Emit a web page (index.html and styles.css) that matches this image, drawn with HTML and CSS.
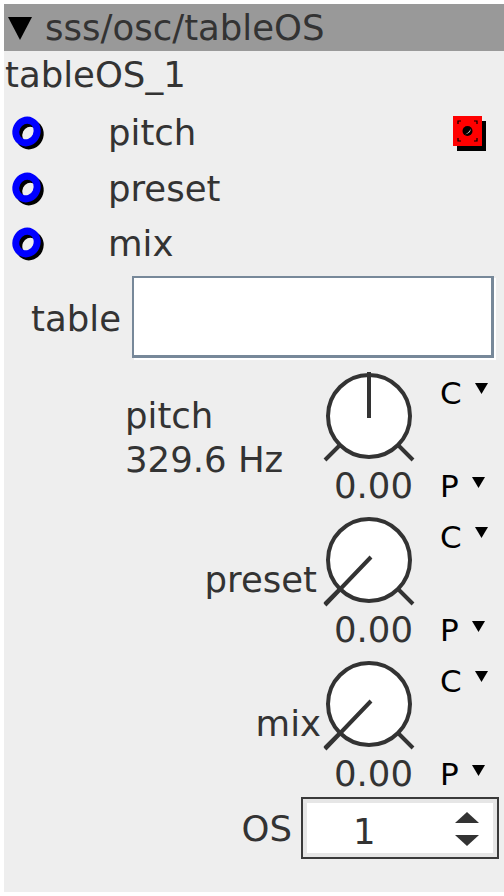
FILE: index.html
```html
<!DOCTYPE html>
<html>
<head>
<meta charset="utf-8">
<link rel="stylesheet" href="styles.css">
</head>
<body>
<div class="panel">
  <div class="header">
    <svg class="htri" width="24" height="23" viewBox="0 0 24 23"><polygon points="0,0 24,0 12,23" fill="#000"/></svg>
    <span class="htext">sss/osc/tableOS</span>
  </div>
  <div class="title">tableOS_1</div>
  <div class="ports">
    <div class="port">
      <svg class="ring" width="36" height="38" viewBox="0 0 36 38"><ellipse cx="18.5" cy="19.5" rx="10.5" ry="11.5" transform="rotate(25 18.5 19.5)" fill="none" stroke="#000" stroke-width="7"/><ellipse cx="15.5" cy="16.5" rx="10.5" ry="11.5" transform="rotate(25 15.5 16.5)" fill="none" stroke="#0000ff" stroke-width="7"/></svg>
      <span class="pname">pitch</span>
      <svg class="outport" width="34" height="36" viewBox="0 0 34 36"><rect x="4" y="5" width="29" height="30" fill="#000"/><rect x="0" y="0" width="29" height="30" fill="#ff0000"/><path d="M5 8V5H8M21 5H24V8M24 22V25H21M8 25H5V22" fill="none" stroke="#000" stroke-width="1.2"/><circle cx="14.5" cy="15" r="5" fill="#000"/><path d="M12 18.5 Q17 16 17.5 12.5 Q18 17 12 18.5Z" fill="#fff"/></svg>
    </div>
    <div class="port">
      <svg class="ring" width="36" height="38" viewBox="0 0 36 38"><ellipse cx="18.5" cy="19.5" rx="10.5" ry="11.5" transform="rotate(25 18.5 19.5)" fill="none" stroke="#000" stroke-width="7"/><ellipse cx="15.5" cy="16.5" rx="10.5" ry="11.5" transform="rotate(25 15.5 16.5)" fill="none" stroke="#0000ff" stroke-width="7"/></svg>
      <span class="pname">preset</span>
    </div>
    <div class="port">
      <svg class="ring" width="36" height="38" viewBox="0 0 36 38"><ellipse cx="18.5" cy="19.5" rx="10.5" ry="11.5" transform="rotate(25 18.5 19.5)" fill="none" stroke="#000" stroke-width="7"/><ellipse cx="15.5" cy="16.5" rx="10.5" ry="11.5" transform="rotate(25 15.5 16.5)" fill="none" stroke="#0000ff" stroke-width="7"/></svg>
      <span class="pname">mix</span>
    </div>
  </div>
  <div class="field">
    <span class="flabel">table</span>
    <div class="finput"></div>
  </div>
  <div class="knobs">
    <div class="knob">
      <div class="klabel-left">pitch<br>329.6 Hz</div>
      <svg class="kdial" width="94" height="94" viewBox="0 0 94 94"><circle cx="47" cy="47" r="41" fill="#fff" stroke="#333" stroke-width="4"/><path d="M3 91L18 76M76 76L91 91M47 3V49" stroke="#333" stroke-width="4" fill="none"/></svg>
      <div class="kval">0.00</div>
      <div class="kc">C<svg class="stri" width="13" height="11" viewBox="0 0 13 11"><polygon points="0,0 13,0 6.5,11" fill="#000"/></svg></div>
      <div class="kp">P<svg class="stri" width="13" height="11" viewBox="0 0 13 11"><polygon points="0,0 13,0 6.5,11" fill="#000"/></svg></div>
    </div>
    <div class="knob">
      <div class="klabel">preset</div>
      <svg class="kdial" width="94" height="94" viewBox="0 0 94 94"><circle cx="47" cy="47" r="41" fill="#fff" stroke="#333" stroke-width="4"/><path d="M3 91L18 76M76 76L91 91M49 44L3 92" stroke="#333" stroke-width="4" fill="none"/></svg>
      <div class="kval">0.00</div>
      <div class="kc">C<svg class="stri" width="13" height="11" viewBox="0 0 13 11"><polygon points="0,0 13,0 6.5,11" fill="#000"/></svg></div>
      <div class="kp">P<svg class="stri" width="13" height="11" viewBox="0 0 13 11"><polygon points="0,0 13,0 6.5,11" fill="#000"/></svg></div>
    </div>
    <div class="knob">
      <div class="klabel klabel-tight">mix</div>
      <svg class="kdial" width="94" height="94" viewBox="0 0 94 94"><circle cx="47" cy="47" r="41" fill="#fff" stroke="#333" stroke-width="4"/><path d="M3 91L18 76M76 76L91 91M49 44L3 92" stroke="#333" stroke-width="4" fill="none"/></svg>
      <div class="kval">0.00</div>
      <div class="kc">C<svg class="stri" width="13" height="11" viewBox="0 0 13 11"><polygon points="0,0 13,0 6.5,11" fill="#000"/></svg></div>
      <div class="kp">P<svg class="stri" width="13" height="11" viewBox="0 0 13 11"><polygon points="0,0 13,0 6.5,11" fill="#000"/></svg></div>
    </div>
  </div>
  <div class="os">
    <span class="oslabel">OS</span>
    <div class="spin">
      <span class="spinval">1</span>
      <svg class="arrows" width="24" height="35" viewBox="0 0 24 35"><polygon points="12,0 24,11 0,11" fill="#333"/><polygon points="0,23 24,23 12,34" fill="#333"/></svg>
    </div>
  </div>
</div>
</body>
</html>
```
FILE: styles.css
```css
html, body {
  margin: 0;
  padding: 0;
  background: #ffffff;
}
body {
  font-family: "DejaVu Sans", "Liberation Sans", sans-serif;
  color: #333333;
}
.panel {
  margin: 4px 0 0 4px;
  width: 500px;
  height: 888px;
  background: #eeeeee;
  font-size: 35.5px;
  display: flex;
  flex-direction: column;
}
.header {
  height: 47px;
  background: #999999;
  display: flex;
  align-items: center;
  padding-left: 4px;
  white-space: nowrap;
}
.htri {
  flex: none;
  margin-right: 13px;
  margin-top: 1px;
}
.htext {
  line-height: 47px;
}
.title {
  line-height: 48px;
  height: 48px;
  padding-left: 1px;
}
.ports {
  margin-top: 6.5px;
  display: flex;
  flex-direction: column;
}
.port {
  height: 55.5px;
  display: flex;
  align-items: center;
}
.ring {
  flex: none;
  margin-left: 7px;
  margin-top: 2px;
}
.pname {
  margin-left: 61px;
  line-height: 36px;
}
.outport {
  flex: none;
  margin-left: auto;
  margin-right: 17px;
  margin-top: 2px;
}
.field {
  margin-top: 4px;
  display: flex;
  align-items: center;
}
.flabel {
  width: 117px;
  text-align: right;
  line-height: 36px;
  margin-right: 11px;
  margin-top: 4px;
}
.finput {
  width: 357px;
  height: 77px;
  background: #ffffff;
  border-style: solid;
  border-color: #778899;
  border-width: 2px 3px 3px 2px;
  box-shadow: 2px 2px 0 #ffffff;
}
.knobs {
  margin-top: 11px;
  display: flex;
  flex-direction: column;
  row-gap: 9px;
}
.knob {
  display: grid;
  grid-template-columns: 318px 94px 1fr;
  grid-template-rows: 94px 36px;
  row-gap: 5px;
  height: 135px;
}
.klabel-left {
  grid-column: 1;
  grid-row: 1 / span 2;
  padding-left: 121px;
  padding-top: 25px;
  line-height: 44px;
  white-space: nowrap;
}
.klabel {
  grid-column: 1;
  grid-row: 1;
  align-self: end;
  text-align: right;
  padding-right: 5px;
  line-height: 36px;
  margin-bottom: 9px;
}
.klabel-tight {
  padding-right: 1px;
}
.kdial {
  grid-column: 2;
  grid-row: 1;
  overflow: visible;
}
.kval {
  grid-column: 2;
  grid-row: 2;
  text-align: right;
  line-height: 36px;
  padding-right: 3px;
  white-space: nowrap;
}
.kc, .kp {
  grid-column: 3;
  color: #000000;
  font-size: 31px;
  padding-left: 24px;
  display: flex;
  align-items: flex-start;
}
.kc {
  grid-row: 1;
  align-self: start;
  line-height: 30px;
  margin-top: 9px;
}
.kp {
  grid-row: 2;
  line-height: 36px;
}
.stri {
  flex: none;
  margin-left: 13px;
}
.kc .stri {
  margin-top: 5px;
}
.kp .stri {
  margin-top: 9px;
}
.os {
  margin-top: 5px;
  display: flex;
  align-items: center;
}
.oslabel {
  width: 288px;
  text-align: right;
  line-height: 36px;
  margin-right: 9px;
  margin-top: 1px;
}
.spin {
  width: 194px;
  height: 58px;
  border: 2px solid #3a3a3a;
  background: #ffffff;
  box-shadow: inset 0 0 0 4px #e6e6e6;
  display: flex;
  align-items: center;
}
.spinval {
  line-height: 36px;
  margin-left: 50px;
  margin-top: 8px;
}
.arrows {
  flex: none;
  margin-left: auto;
  margin-right: 18px;
  margin-top: 2px;
}
```
